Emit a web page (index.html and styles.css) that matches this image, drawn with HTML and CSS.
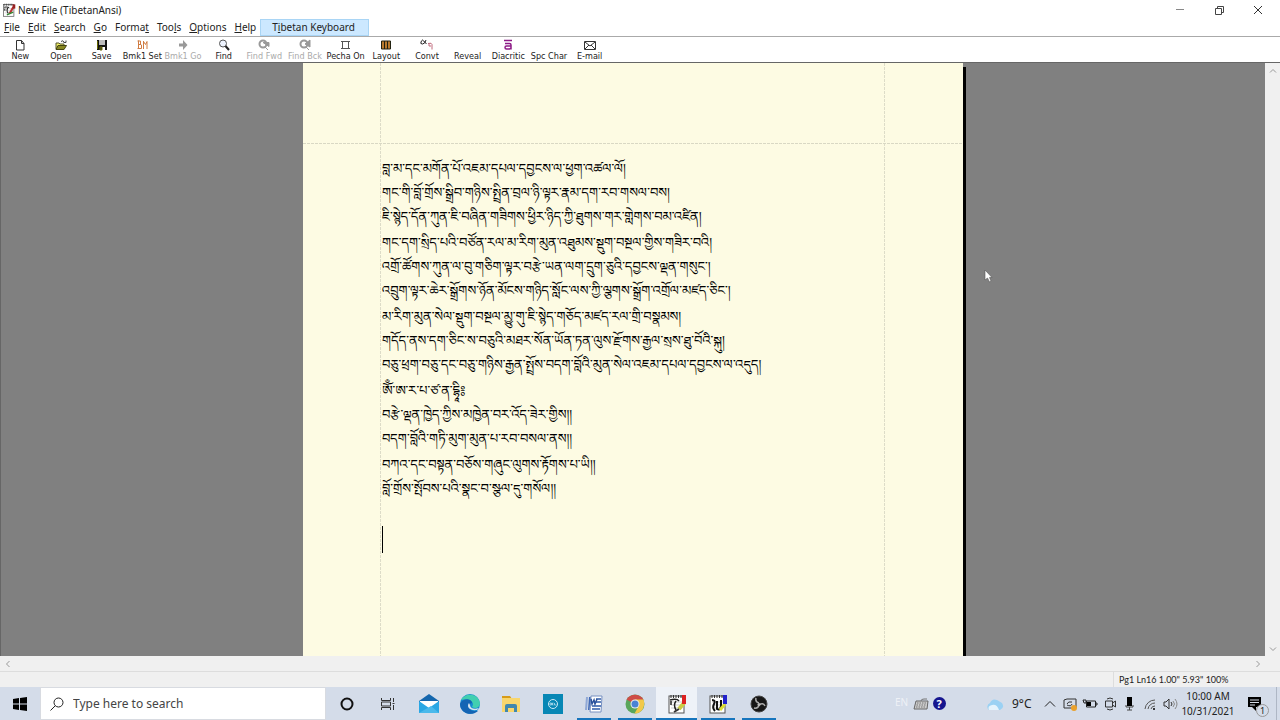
FILE: index.html
```html
<!DOCTYPE html>
<html lang="en">
<head>
<meta charset="utf-8">
<title>New File (TibetanAnsi)</title>
<link rel="stylesheet" href="styles.css">
</head>
<body>
<svg class="defs" aria-hidden="true">
  <symbol id="notebook" viewBox="0 0 20 20">
    <rect x="2" y="2" width="15" height="17" fill="#fff" stroke="#555"/>
    <path d="M4 1v3M6.500 1v3M9 1v3M11.500 1v3M14 1v3" stroke="#333"/>
    <path d="M4 8h11M4 11h11M4 14h11" stroke="#ccc"/>
  </symbol>
</svg>
<div class="app">
  <header class="titlebar">
    <svg class="app-icon" viewBox="0 0 20 20"><use href="#notebook"/><path d="M3 6q6-1 7 1M8 7q-2 4 1 8M4 8v3" fill="none" stroke="#222" stroke-width="1.500"/><path d="M16 6l-5 9" stroke="#b33" stroke-width="3"/><path d="M15 2h4v6h-4z" fill="#922"/><path d="M7 17l9-4" stroke="#383" stroke-width="2"/></svg>
    <h1>New File (TibetanAnsi)</h1>
    <div class="window-controls">
      <button aria-label="Minimize"><svg viewBox="0 0 12 12"><path d="M2 5.500h8" stroke="#888"/></svg></button>
      <button aria-label="Restore"><svg viewBox="0 0 12 12"><path d="M2.500 4.500h6v6h-6zM4.500 4V2.500h6v6H9" fill="none" stroke="#444"/></svg></button>
      <button aria-label="Close"><svg viewBox="0 0 12 12"><path d="M2 2l8 8M10 2l-8 8" stroke="#333"/></svg></button>
    </div>
  </header>

  <nav class="menubar">
    <button><u>F</u>ile</button>
    <button><u>E</u>dit</button>
    <button><u>S</u>earch</button>
    <button><u>G</u>o</button>
    <button>Forma<u>t</u></button>
    <button>Too<u>l</u>s</button>
    <button><u>O</u>ptions</button>
    <button><u>H</u>elp</button>
    <button class="highlight">T<u>i</u>betan Keyboard</button>
  </nav>

  <div class="toolbar">
    <button><svg viewBox="0 0 12 12"><path d="M2.500 1.500h5l2.500 3v6.500H2.500zM7.500 1.500v3H10" fill="#fff" stroke="#333"/></svg>New</button>
    <button><svg viewBox="0 0 12 12"><path d="M1 10V4h3l1 1h4v2" fill="#ee6" stroke="#553"/><path d="M1 10.500l2-4h8.500l-2.500 4z" fill="#882" stroke="#441"/><path d="M6 2.500q2-2 3.500 1M11 1.500v2H8.500" fill="none" stroke="#444"/></svg>Open</button>
    <button><svg viewBox="0 0 12 12"><path d="M1 1h10v10H1z" fill="#111"/><path d="M3 1h6v5H3z" fill="#bbb"/><path d="M4 8h5v3H4z" fill="#fff"/><path d="M4 8h2v3H4zM1.500 2v8" fill="#333" stroke="#660"/></svg>Save</button>
    <button><svg viewBox="0 0 12 12"><path d="M2.500 1.500v8M1.500 2h3v3.500l1 .5v3.500h-4M2 5.500h3M7.500 2v8M7.500 2.500l2 3 1.500-3v7.500" fill="none" stroke="#d07c42"/></svg>Bmk1 Set</button>
    <button disabled><svg viewBox="0 0 12 12"><path d="M2 4.500h4V1l4.500 5L6 11V7.500H2z" fill="#999"/></svg>Bmk1 Go</button>
    <button><svg viewBox="0 0 12 12"><circle cx="5" cy="4.500" r="3.500" fill="#eef4ff" stroke="#555"/><path d="M7.500 7l3.500 4" stroke="#222" stroke-width="2"/></svg>Find</button>
    <button disabled><svg viewBox="0 0 12 12"><circle cx="5" cy="5" r="3.500" fill="none" stroke="#999" stroke-width="2"/><path d="M7 8l3 3M5 3.500h6v4z" fill="#999" stroke="#999"/></svg>Find Fwd</button>
    <button disabled><svg viewBox="0 0 12 12"><circle cx="5" cy="5" r="3.500" fill="none" stroke="#999" stroke-width="2"/><path d="M7 8l3 3M11 1v7L6 5z" fill="#999" stroke="#999"/></svg>Find Bck</button>
    <button><svg viewBox="0 0 12 12"><path d="M2.500 2v8M8.500 2v8M2 2.500h7M2 9.500h7M1 2.500h1M9 2.500h1M1 9.500h1M9 9.500h1" fill="none" stroke="#555"/></svg>Pecha On</button>
    <button><svg viewBox="0 0 12 12"><path d="M1.500 2h9v8h-9z" fill="#b8792d" stroke="#221"/><path d="M4.500 2v8M7.500 2v8" stroke="#221"/></svg>Layout</button>
    <button><svg class="wide" viewBox="0 0 14 12"><path d="M6 1Q5 5 2.500 5T1 3 2.500 1t4 4" fill="none" stroke="#222"/><path d="M8 4.500q4-1 4 1v5M9 5v2h2" fill="none" stroke="#c06a7c"/></svg>Convt</button>
    <button><svg viewBox="0 0 12 12"></svg>Reveal</button>
    <button><svg viewBox="0 0 12 12"><path d="M2 1.500h8M3 4.500h4.500q1.500 0 1.500 1.500v4.500M9 7H4.500Q3 7 3 8.500T4.500 10h3L9 9" fill="none" stroke="#8d1b86" stroke-width="1.500"/></svg>Diacritic</button>
    <button><svg viewBox="0 0 12 12"></svg>Spc Char</button>
    <button><svg viewBox="0 0 12 12"><path d="M.5 2.500h11v8H.5zM1 3l5 4 5-4M1 10l4-4M11 10L7 6" fill="none" stroke="#333"/></svg>E-mail</button>
  </div>

  <main class="workspace">
    <div class="canvas">
      <div class="sheet">
        <div class="document" role="textbox" aria-label="Document" aria-multiline="true" contenteditable="true" spellcheck="false" lang="bo">
          <p>བླ་མ་དང་མགོན་པོ་འཇམ་དཔལ་དབྱངས་ལ་ཕྱག་འཚལ་ལོ།<br>གང་གི་བློ་གྲོས་སྒྲིབ་གཉིས་སྤྲིན་བྲལ་ཉི་ལྟར་རྣམ་དག་རབ་གསལ་བས།<br>ཇི་སྙེད་དོན་ཀུན་ཇི་བཞིན་གཟིགས་ཕྱིར་ཉིད་ཀྱི་ཐུགས་གར་གླེགས་བམ་འཛིན།</p>
          <p>གང་དག་སྲིད་པའི་བཙོན་རལ་མ་རིག་མུན་འཐུམས་སྡུག་བསྔལ་གྱིས་གཟིར་བའི།<br>འགྲོ་ཚོགས་ཀུན་ལ་བུ་གཅིག་ལྟར་བརྩེ་ཡན་ལག་དྲུག་ཅུའི་དབྱངས་ལྡན་གསུང་།<br>འབྲུག་ལྟར་ཆེར་སྒྲོགས་ཉོན་མོངས་གཉིད་སློང་ལས་ཀྱི་ལྕགས་སྒྲོག་འགྲོལ་མཛད་ཅིང་།</p>
          <p>མ་རིག་མུན་སེལ་སྡུག་བསྔལ་མྱུ་གུ་ཇི་སྙེད་གཅོད་མཛད་རལ་གྲི་བསྣམས།<br>གདོད་ནས་དག་ཅིང་ས་བཅུའི་མཐར་སོན་ཡོན་ཏན་ལུས་རྫོགས་རྒྱལ་སྲས་ཐུ་བོའི་སྐུ།<br>བཅུ་ཕྲག་བཅུ་དང་བཅུ་གཉིས་རྒྱན་སྤྲོས་བདག་བློའི་མུན་སེལ་འཇམ་དཔལ་དབྱངས་ལ་འདུད།</p>
          <p>ཨོྃ་ཨ་ར་པ་ཙ་ན་དྷཱི༔<br>བརྩེ་ལྡན་ཁྱེད་ཀྱིས་མཁྱེན་བར་འོད་ཟེར་གྱིས།།<br>བདག་བློའི་གཏི་མུག་མུན་པ་རབ་བསལ་ནས།།</p>
          <p>བཀའ་དང་བསྟན་བཅོས་གཞུང་ལུགས་རྟོགས་པ་ཡི།།<br>བློ་གྲོས་སྤོབས་པའི་སྣང་བ་སྩལ་དུ་གསོལ།།</p>
          <p class="caret-line"><span class="caret"></span></p>
        </div>
      </div>
      <svg class="pointer" viewBox="0 0 9 14"><path d="M1 1v10l2.500-2 2 4 1.500-1-1.500-3.500H8z" fill="#fff" stroke="#555" stroke-width=".6"/></svg>
    </div>
    <div class="scroll-v">
      <button aria-label="Scroll up"><svg viewBox="0 0 10 10"><path d="M2 6.500l3-3 3 3"/></svg></button>
      <button aria-label="Scroll down"><svg viewBox="0 0 10 10"><path d="M2 3.500l3 3 3-3"/></svg></button>
    </div>
    <div class="scroll-h">
      <button aria-label="Scroll left"><svg viewBox="0 0 10 10"><path d="M6.500 2l-3 3 3 3"/></svg></button>
      <button aria-label="Scroll right"><svg viewBox="0 0 10 10"><path d="M3.500 2l3 3-3 3"/></svg></button>
    </div>
  </main>

  <div class="statusbar"><span>Pg1 Ln16 1.00" 5.93" 100%</span></div>

  <footer class="taskbar">
    <button class="start" aria-label="Start"><svg viewBox="0 0 14 14"><path d="M0 2l6-1v5.500H0zM7 .9L14 0v6.500H7zM0 7.500h6V13l-6-1zM7 7.500h7V14l-7-.9z"/></svg></button>
    <label class="search">
      <svg viewBox="0 0 14 14"><circle cx="8.500" cy="5.500" r="4.500" fill="none" stroke="#222"/><path d="M5.300 8.700L.5 13.500" stroke="#222"/></svg>
      <input type="text" aria-label="Search" placeholder="Type here to search">
    </label>
    <button class="system" aria-label="Cortana"><svg viewBox="0 0 14 14"><circle cx="7" cy="7" r="5.500" fill="none" stroke="#111" stroke-width="2"/></svg></button>
    <button class="system" aria-label="Task View"><svg viewBox="0 0 14 14"><path d="M.5 1v2.500h9V1M.5 13v-2.500h9V13M.5 5v4h9V5zM12.500 1v4M12.500 8v5M11.500 6.500h2" fill="none" stroke="#333"/></svg></button>
    <div class="apps">
      <button aria-label="Mail"><svg viewBox="0 0 20 20"><path d="M0 7l10-7 10 7v12H0z" fill="#1466ad"/><path d="M1 7h18v8H1z" fill="#fff"/><path d="M0 7l10 7 10-7v12H0z" fill="#2aa7e4"/><path d="M0 19l12-7 8 7z" fill="#4ab9eb"/></svg></button>
      <button aria-label="Edge"><svg viewBox="0 0 20 20"><circle cx="10" cy="10" r="10" fill="#168bd2"/><path d="M1 6C4-1 18-2 20 9c0 5-5 6-8 4 3-4-1-9-11-7z" fill="#42cfb0"/><path d="M0 10c2-6 12-6 12-1-5 1-4 8 3 8h3C11 23 0 19 0 10z" fill="#1464b4"/><path d="M9 9c-3 4 1 8 8 7l2-2c-5 2-9 0-9-3z" fill="#d7e4ee"/></svg></button>
      <button aria-label="File Explorer"><svg viewBox="0 0 20 20"><path d="M1 2h8l2 3H1z" fill="#d79b19"/><path d="M1 4h18v14H1z" fill="#f8d66d"/><path d="M4 18v-6q0-2 2-2h8q2 0 2 2v6h-3v-4H7v4z" fill="#4087ae"/></svg></button>
      <button aria-label="Dell"><svg viewBox="0 0 20 20"><path d="M0 0h20v20H0z" fill="#0787b5"/><circle cx="10" cy="10" r="4.500" fill="none" stroke="#cdeaf5"/><path d="M7 9h1.500v2H7zM10.500 9H9.500v2h1M11.500 9v2h2" fill="none" stroke="#cdeaf5" stroke-width=".7"/></svg></button>
      <button class="open" aria-label="Word"><svg viewBox="0 0 20 20"><path d="M7 2h11l-1 16H6z" fill="#fff" stroke="#7690c1"/><path d="M12 5h5M12 8h5M8 12h9M8 15h8" stroke="#2e5ba9" stroke-width="1.500"/><path d="M2 3h2L3 16H1z" fill="#8fa8d6"/><path d="M5 3h1.500l-1 13H4z" fill="#4069b5"/><path d="M7 5l1 5 2-4 1 4 2-5" fill="none" stroke="#2b529c" stroke-width="1.500"/></svg></button>
      <button class="open" aria-label="Chrome"><svg viewBox="0 0 20 20"><circle cx="10" cy="10" r="9.500" fill="#5aa65b"/><path d="M10 10L1.500 5.500C5-1 15-1 18.500 5.500z" fill="#ce4c47"/><path d="M10 5.500h8.500C21 13 16 20 9.500 19.500l4-7z" fill="#f2c94a"/><circle cx="10" cy="10" r="4.500" fill="#eee"/><circle cx="10" cy="10" r="3.500" fill="#4b83d4"/></svg></button>
      <button class="open current" aria-label="Tibetan editor"><svg viewBox="0 0 20 20"><use href="#notebook"/><path d="M3 6q7-2 9 1M9 7q-3 4 0 9M4 7v4" fill="none" stroke="#222" stroke-width="1.500"/><path d="M17 9l-5 6" stroke="#cc4" stroke-width="4"/><path d="M15 1h4v9h-4z" fill="#d22"/><path d="M7 18l5-3" stroke="#333" stroke-width="2"/></svg></button>
      <button class="open" aria-label="Document editor"><svg viewBox="0 0 20 20"><use href="#notebook"/><path d="M4 6q4 0 2 4t1 7M9 7v8q3 2 4-3V6" fill="none" stroke="#111" stroke-width="2"/><path d="M17 10l-5 6" stroke="#dd3" stroke-width="3"/><path d="M15 1h4v9h-4z" fill="#22c"/></svg></button>
      <button class="open" aria-label="OBS Studio"><svg viewBox="0 0 20 20"><circle cx="10" cy="10" r="8" fill="#171717" stroke="#444"/><path d="M10 9q-4-1-3-5M10 11q4-3 6 1M10 11q-1 4-5 3" fill="none" stroke="#aaa" stroke-width="1.500"/><circle cx="10" cy="10.500" r="1.500" fill="#bbb"/></svg></button>
    </div>
    <div class="tray">
      <span class="lang">EN</span>
      <button aria-label="Keyboard"><svg viewBox="0 0 16 16"><path d="M3 5h12l-1 8H1z" fill="#ccc" stroke="#666"/><path d="M4 7h9M3.500 9h9.500M3 11h10" stroke="#777" stroke-dasharray="1.500 1"/><path d="M8 5q0-2 3-2h3" fill="none" stroke="#777"/></svg></button>
      <button class="help" aria-label="Help"><span>?</span></button>
      <button class="weather"><svg viewBox="0 0 18 14"><path d="M3 13a4 4 0 0 1 1-7q2-5 7-3l5 3q3 5-2 7z" fill="#9bd1f3"/><path d="M3 13q-2-4 3-5 5-1 7 5z" fill="#e5f3fc"/></svg>9°C</button>
      <button aria-label="Show hidden icons"><svg viewBox="0 0 16 16"><path d="M3 10.500l5-5 5 5" fill="none" stroke="#222"/></svg></button>
      <button aria-label="Update"><svg viewBox="0 0 16 16"><path d="M2 4l3-1h9v9H2z" fill="none" stroke="#333"/><path d="M5 8q1-3 5-2M10 8q-1 3-5 1" fill="none" stroke="#333"/><circle cx="12" cy="12" r="3" fill="#eaa12c"/></svg></button>
      <button aria-label="Battery"><svg viewBox="0 0 16 16"><path d="M4.500 5h9v6h-9zM14 7h1v2h-1M1 4h3v3H2z" fill="none" stroke="#222"/><path d="M5 6h4v4H5z"/></svg></button>
      <button aria-label="Meet now"><svg viewBox="0 0 16 16"><path d="M3.500 5h7v6h-7zM10.500 7l3-2v6l-3-2M5 3q3-2 6 0M5 13q3 2 6 0" fill="none" stroke="#333"/></svg></button>
      <button aria-label="Microphone"><svg viewBox="0 0 16 16"><path d="M5 1h5v9H5z"/><path d="M4 9v2h7V9M7.500 11v3M5 14h5" fill="none" stroke="#444"/></svg></button>
      <button aria-label="Network"><svg viewBox="0 0 16 16"><path d="M3 13A10 10 0 0 1 13 4M6 13a7 7 0 0 1 7-6M9 13a4 4 0 0 1 4-3" fill="none" stroke="#555"/><circle cx="12" cy="13" r="1"/></svg></button>
      <button aria-label="Volume"><svg viewBox="0 0 16 16"><path d="M2 6h2l3-3v10l-3-3H2zM9 6q2 2 0 4" fill="none" stroke="#333"/><path d="M11 5q3 3 0 6M13 3q4 5 0 10" fill="none" stroke="#888"/></svg></button>
      <button class="clock"><span>10:00 AM</span><span>10/31/2021</span></button>
      <button class="notice" aria-label="Notifications"><svg viewBox="0 0 16 16"><path d="M1 1h13v10H9v4l-4-4H1z"/><path d="M3 4h9M3 6.500h9M3 9h5" stroke="#d5dce8"/></svg><span>1</span></button>
    </div>
  </footer>
</div>
</body>
</html>
```
FILE: styles.css
```css
* { box-sizing: border-box; }
body { margin: 0; font-family: "Noto Sans", "Open Sans", sans-serif; color: #222; }
button { border: 0; padding: 0; margin: 0; background: none; color: inherit; font: inherit; }
svg { display: block; flex: none; }
.defs { position: absolute; width: 0; height: 0; }

.app { display: grid; grid-template-rows: auto auto auto 1fr auto auto; height: 100vh; min-height: 480px; overflow: hidden; background: #fff; }

.titlebar { display: flex; align-items: center; height: 19px; padding-left: 2px; }
.app-icon { width: 14px; height: 14px; }
.titlebar h1 { margin: 0 0 0 2px; font: 400 10px/16px "Noto Sans", sans-serif; }
.window-controls { display: flex; margin-left: auto; padding-right: 3px; }
.window-controls button { display: grid; place-items: center; width: 39px; height: 19px; }
.window-controls svg { width: 12px; height: 12px; }

.menubar { display: flex; height: 18px; font: 10px/17px "Noto Sans", sans-serif; border-bottom: 1px solid #aaa; }
.menubar button { padding: 0 4px; height: 17px; white-space: nowrap; }
.menubar u { text-underline-offset: 1px; }
.menubar .highlight { padding: 0 13px 0 11px; background: #cce8ff; border: 1px solid #a9d5f5; line-height: 15px; }

.toolbar { display: grid; grid-template-columns: repeat(15, minmax(0, 1fr)); width: 610px; height: 25px; font: 9px/10px "DejaVu Sans Condensed", "DejaVu Sans", sans-serif; }
.toolbar button { display: flex; flex-direction: column; align-items: center; padding-top: 2px; white-space: nowrap; }
.toolbar button:disabled { color: #aaa; }
.toolbar svg { width: 12px; height: 12px; }
.toolbar .wide { width: 14px; }

.workspace { display: grid; grid-template-columns: minmax(0, 1fr) 15px; grid-template-rows: minmax(0, 1fr) 15px; background: #f0f0f0; border-top: 1px solid #666; min-height: 0; }
.canvas { position: relative; display: flex; justify-content: center; background: #808080; border-left: 1px solid #666; overflow: hidden; }
.sheet {
  width: 660px; padding: 98px 79px 0; background-color: #fdfbe3; box-shadow: 3px 4px 0 #000;
  background-image:
    repeating-linear-gradient(90deg, #d9d8c4 0 3px, transparent 3px 4px),
    repeating-linear-gradient(#dddcc8 0 3px, transparent 3px 4px),
    repeating-linear-gradient(#dddcc8 0 3px, transparent 3px 4px);
  background-size: 100% 1px, 1px 100%, 1px 100%;
  background-position: 0 80px, 77px 0, 581px 0;
  background-repeat: no-repeat;
}
.document { outline: 0; color: #000; font-family: "Noto Serif Tibetan", "Microsoft Himalaya", "Jomolhari", serif; font-size: 13px; line-height: 24px; white-space: nowrap; }
.document p { margin: 0 0 2px; }
.document .caret-line { padding-top: 19px; }
.caret { display: block; width: 1px; height: 27px; background: #000; }
.pointer { position: absolute; left: 983px; top: 206px; width: 9px; height: 14px; }

.scroll-v, .scroll-h { display: flex; justify-content: space-between; }
.scroll-v { flex-direction: column; }
.scroll-h { grid-column: 1; }
.scroll-v button, .scroll-h button { display: grid; place-items: center; width: 15px; height: 15px; }
.scroll-v svg, .scroll-h svg { width: 10px; height: 10px; fill: none; stroke: #999; }

.statusbar { display: flex; justify-content: flex-end; height: 16px; background: #f0f0f0; border-top: 1px solid #ddd; font: 9px/16px Lato, sans-serif; }
.statusbar span { width: 167px; padding-left: 5px; border-left: 1px solid #ddd; }

.taskbar { display: flex; height: 33px; background: #d4dce9; }
.taskbar > button, .apps button, .tray button { display: grid; place-items: center; }
.start { width: 40px; }
.start svg, .system svg { width: 14px; height: 14px; }
.system { width: 41px; }
.search { display: flex; align-items: center; gap: 9px; width: 286px; padding-left: 9px; background: #fff; border: 1px solid #d8dbe1; }
.search svg { width: 14px; height: 14px; }
.search input { flex: 1; min-width: 0; padding: 0; border: 0; outline: 0; background: none; font: 12px/20px "Noto Sans", sans-serif; }
.search input::placeholder { color: #444; opacity: 1; }
.apps { display: grid; grid-template-columns: repeat(9, minmax(0, 1fr)); width: 372px; }
.apps svg { width: 20px; height: 20px; }
.apps .open { background: linear-gradient(#1675bd, #1675bd) center bottom / 34px 2px no-repeat; }
.apps .current { background-color: #eef2f8; background-size: 100% 2px; }

.tray { display: flex; margin-left: auto; padding-right: 3px; margin-right: 3px; border-right: 1px solid #aeb7c5; }
.tray button { width: 20px; }
.tray svg { width: 16px; height: 16px; }
.tray .lang { width: 16px; font-size: 10px; line-height: 31px; color: #eef1f6; }
.tray .help { width: 16px; }
.help span { width: 13px; height: 13px; border-radius: 50%; background: #16168f; color: #fff; font-size: 11px; line-height: 13px; font-weight: 700; text-align: center; }
.tray .weather { display: flex; align-items: center; gap: 8px; width: 53px; margin: 0 1px 0 39px; font-size: 12px; white-space: nowrap; }
.tray .weather svg { width: 18px; height: 14px; }
.tray .clock { display: flex; flex-direction: column; align-items: center; justify-content: center; width: 56px; font-size: 10px; line-height: 15px; white-space: nowrap; }
.tray .notice { position: relative; width: 37px; }
.notice span { position: absolute; right: 4px; bottom: 3px; width: 13px; height: 13px; border: 1px solid #999; border-radius: 50%; background: #d4dce9; font-size: 9px; line-height: 11px; }
```
